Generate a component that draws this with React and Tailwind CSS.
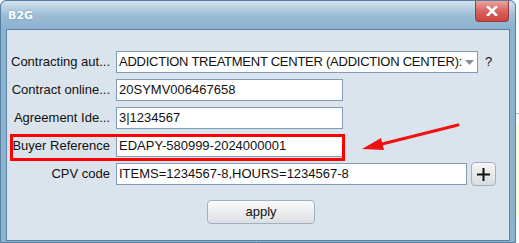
const font = { fontFamily: '"Liberation Sans", Arial, sans-serif' };

function Field({ label, value, width }) {
  return (
    <div className="flex items-center h-[22px]">
      <div className="w-[103px] text-right text-[13px] text-[#111] whitespace-nowrap overflow-hidden">
        {label}
      </div>
      <div
        className={`ml-[6px] h-[22px] ${width} bg-white border border-[#7f9db9] pl-[2px] text-[13px] leading-[20px] text-[#111] whitespace-nowrap overflow-hidden`}
      >
        {value}
      </div>
    </div>
  );
}

export default function App() {
  return (
    <div className="relative flex w-[519px] h-[243px] bg-white overflow-hidden" style={font}>
      {/* dialog window */}
      <div className="flex flex-col w-[516px] h-[243px] rounded-t-[6px] border border-[#587ea0] bg-[#8cb2ce]">
        {/* title bar */}
        <div className="relative h-[28px] shrink-0 rounded-t-[6px] bg-gradient-to-b from-[#d3e3f0] via-[#9dbdd6] to-[#8bb1cd]">
          <span
            className="absolute left-[7px] top-[9px] text-[11px] font-bold text-white leading-none [text-shadow:0_0_2px_#6e93b0]"
            style={{ fontFamily: '"DejaVu Sans", Verdana, sans-serif' }}
          >
            B2G
          </span>
          <button className="absolute right-[6px] top-0 w-[34px] h-[21px] rounded-b-[4px] border border-t-0 border-[#9b3b38] bg-gradient-to-b from-[#eaa29f] via-[#d9635f] to-[#c7443f] flex items-center justify-center">
            <svg width="12" height="10" viewBox="0 0 12 10">
              <path d="M2 1 L10 9 M10 1 L2 9" stroke="white" strokeWidth="2.6" strokeLinecap="square" />
            </svg>
          </button>
        </div>

        {/* content */}
        <div className="flex-1 ml-[5px] mr-[5px] mb-[1px] border border-[#5b81a4] bg-[#dbe4ec] pt-[21px] flex flex-col gap-[6px]">
          <div className="flex items-center h-[22px]">
            <div className="w-[103px] text-right text-[13px] text-[#111] whitespace-nowrap">
              Contracting aut...
            </div>
            <div className="ml-[6px] relative h-[22px] w-[362px] bg-white border border-[#7f9db9] pl-[2px] text-[13px] leading-[20px] text-[#111] whitespace-nowrap">
              <span className="tracking-[-0.25px]">
                ADDICTION TREATMENT CENTER (ADDICTION CENTER):
              </span>
              <svg className="absolute right-[3px] top-[8px]" width="9" height="5" viewBox="0 0 9 5">
                <path d="M0 0 H9 L4.5 5 Z" fill="#8a8f96" />
              </svg>
            </div>
            <span className="ml-[7px] text-[13px] text-[#111]">?</span>
          </div>
          <Field label="Contract online..." value="20SYMV006467658" width="w-[227px]" />
          <Field label="Agreement Ide..." value="3|1234567" width="w-[227px]" />
          <Field label="Buyer Reference" value="EDAPY-580999-2024000001" width="w-[227px]" />
          <div className="flex items-center h-[22px]">
            <div className="w-[103px] text-right text-[13px] text-[#111]">CPV code</div>
            <div className="ml-[6px] h-[22px] w-[351px] bg-white border border-[#7f9db9] pl-[2px] text-[13px] leading-[20px] text-[#111] whitespace-nowrap overflow-hidden">
              ITEMS=1234567-8,HOURS=1234567-8
            </div>
            <button className="ml-[4px] w-[25px] h-[24px] rounded-[4px] border border-[#9fb1c2] bg-gradient-to-b from-[#f6f6f6] to-[#d9dcdf] flex items-center justify-center">
              <svg width="15" height="15" viewBox="0 0 15 15">
                <path d="M7.5 1 V14 M1 7.5 H14" stroke="#111" strokeWidth="2" />
              </svg>
            </button>
          </div>
          <div className="mt-[8px] pl-[200px]">
            <button className="w-[108px] h-[24px] rounded-[4px] border border-[#9fb1c2] bg-gradient-to-b from-[#fbfbfb] to-[#dcdfe2] text-[13px] text-[#111]">
              apply
            </button>
          </div>
        </div>
      </div>

      {/* strip of the page behind the dialog */}
      <div className="flex flex-col w-[3px]">
        <div className="h-[113px] bg-white" />
        <div className="h-[1px] bg-[#b8b8b8]" />
        <div className="h-[11px] bg-white" />
        <div className="h-[92px] bg-[#fdfde0]" />
        <div className="flex-1 bg-white" />
      </div>

      {/* red annotation */}
      <div className="absolute left-[10px] top-[134px] w-[335px] h-[27px] border-[3px] border-[#ff0000]" />
      <svg className="absolute left-0 top-0" width="519" height="243" viewBox="0 0 519 243">
        <path d="M458 125 L378 145" stroke="#ee1111" strokeWidth="3" strokeLinecap="round" />
        <path d="M362 149 L381 138 L384 150 Z" fill="#ee1111" />
      </svg>
    </div>
  );
}
